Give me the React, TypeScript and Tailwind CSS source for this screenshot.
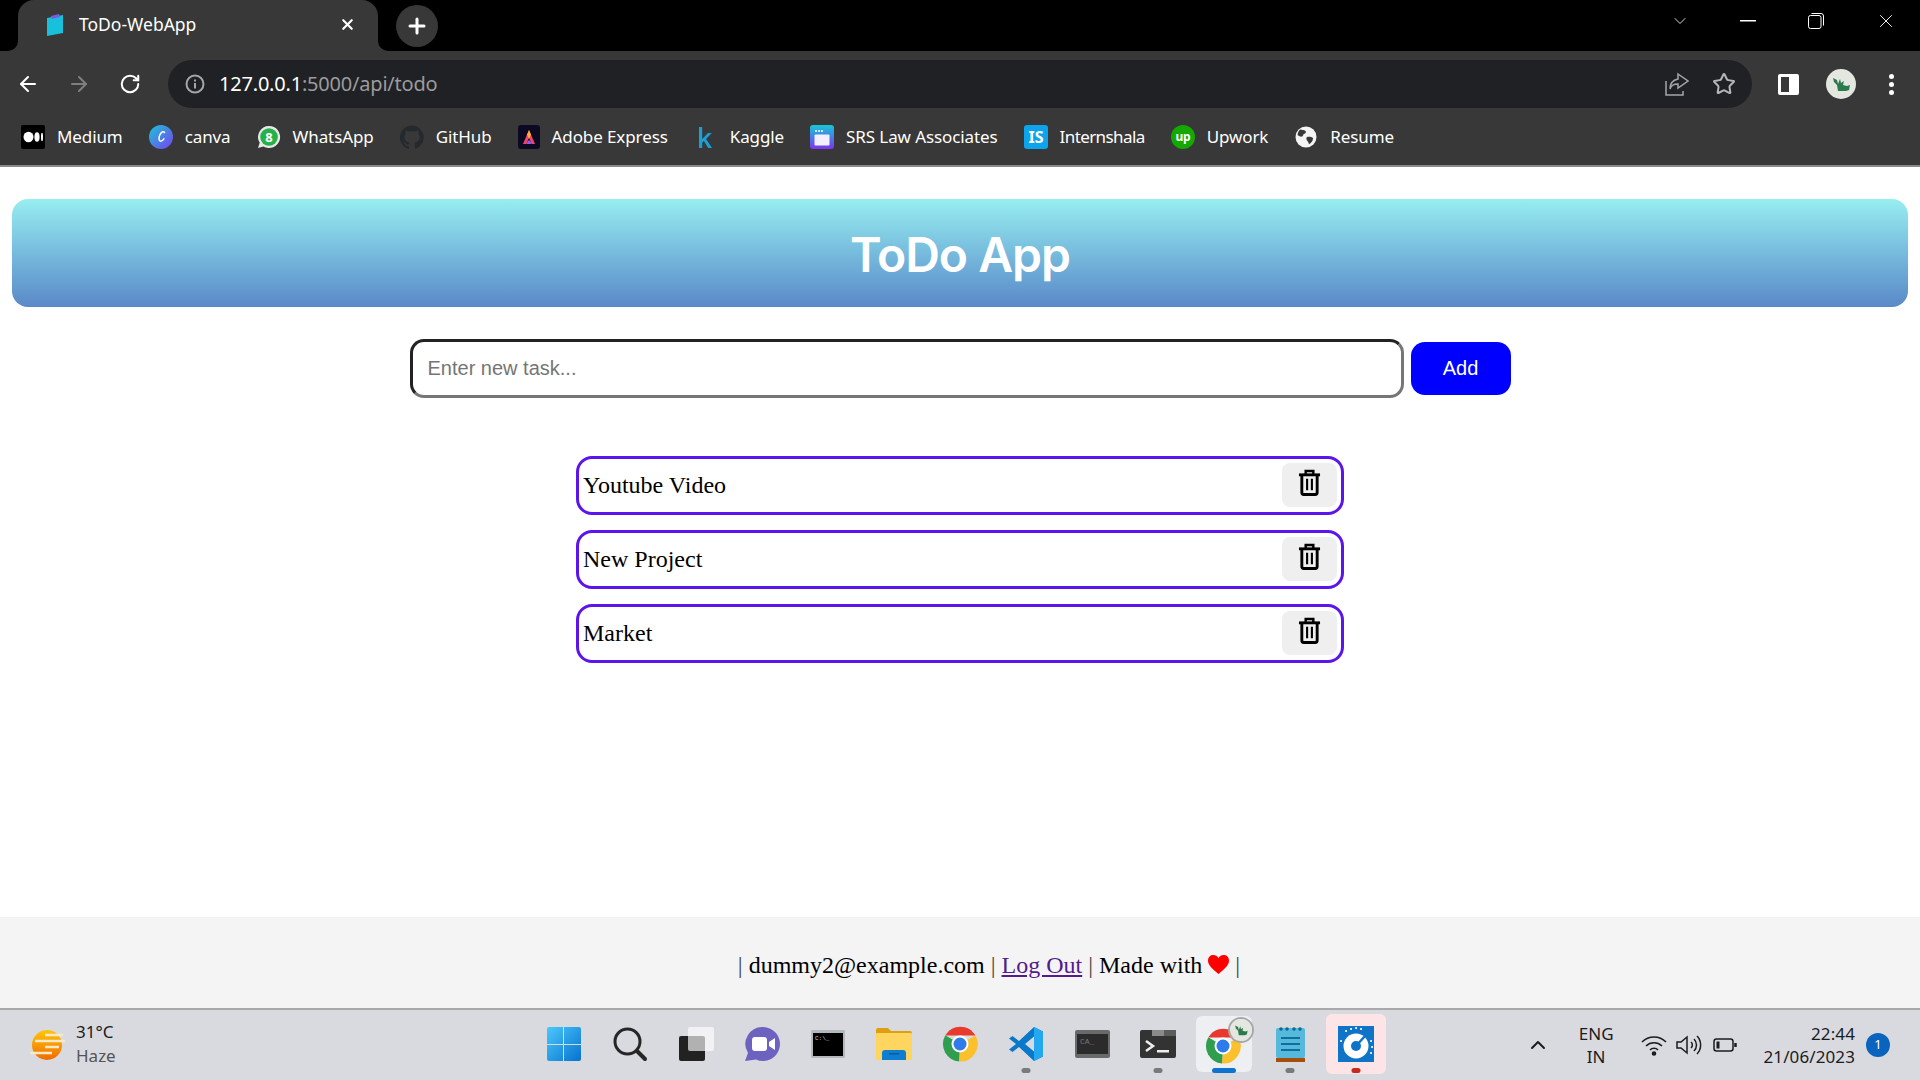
import { ArrowLeft, ArrowRight, ChevronDown, ChevronUp, Plus, RotateCw, Star, X } from "lucide-react"

const bookmarks = [
  { name: "Medium", icon: <MediumIcon /> },
  { name: "canva", icon: <CanvaIcon /> },
  { name: "WhatsApp", icon: <WhatsAppIcon /> },
  { name: "GitHub", icon: <GithubIcon /> },
  { name: "Adobe Express", icon: <AdobeIcon /> },
  { name: "Kaggle", icon: <KaggleIcon /> },
  { name: "SRS Law Associates", icon: <SrsIcon /> },
  { name: "Internshala", icon: <InternshalaIcon />, textClass: "tracking-[-0.6px]" },
  { name: "Upwork", icon: <UpworkIcon /> },
  { name: "Resume", icon: <GlobeIcon /> },
]

const todos = ["Youtube Video", "New Project", "Market"]

function MediumIcon() {
  return (
    <svg width="24" height="24" viewBox="0 0 24 24">
      <rect width="24" height="24" rx="2" fill="#000" />
      <ellipse cx="7.5" cy="12" rx="5" ry="5.2" fill="#fff" />
      <ellipse cx="16" cy="12" rx="2.6" ry="4.8" fill="#fff" />
      <ellipse cx="21" cy="12" rx="1" ry="4.2" fill="#fff" />
    </svg>
  )
}

function CanvaIcon() {
  return (
    <svg width="24" height="24" viewBox="0 0 24 24">
      <defs>
        <linearGradient id="canva" x1="0" y1="0" x2="1" y2="1">
          <stop offset="0" stopColor="#19c6d8" />
          <stop offset="1" stopColor="#7a3ff0" />
        </linearGradient>
      </defs>
      <circle cx="12" cy="12" r="12" fill="url(#canva)" />
      <path d="M15.5 7.5c-1-1.6-3.4-.4-4.6 2.2-1.3 2.8-1.2 6.4.6 6.6 1.3.1 2.6-1.2 3.4-2.4" fill="none" stroke="#fff" strokeWidth="1.5" strokeLinecap="round" />
    </svg>
  )
}

function WhatsAppIcon() {
  return (
    <svg width="24" height="24" viewBox="0 0 24 24">
      <path d="M12 1a11 11 0 0 0-9.3 16.8L1 23l5.4-1.6A11 11 0 1 0 12 1z" fill="#e8e8e8" />
      <circle cx="12" cy="12" r="8.8" fill="#25b14a" />
      <text x="12" y="16.5" textAnchor="middle" fontSize="13" fontWeight="700" fill="#fff" fontFamily="Noto Sans, sans-serif">8</text>
    </svg>
  )
}

function GithubIcon() {
  return (
    <svg width="24" height="24" viewBox="0 0 24 24">
      <path d="M12 .5a12 12 0 0 0-3.8 23.4c.6.1.8-.3.8-.6v-2.1c-3.3.7-4-1.6-4-1.6-.5-1.4-1.3-1.8-1.3-1.8-1.1-.7.1-.7.1-.7 1.2.1 1.8 1.2 1.8 1.2 1.1 1.8 2.8 1.3 3.5 1 .1-.8.4-1.3.8-1.6-2.7-.3-5.5-1.3-5.5-5.9 0-1.3.5-2.4 1.2-3.2-.1-.3-.5-1.5.1-3.2 0 0 1-.3 3.3 1.2a11.500 11.500 0 0 1 6 0c2.300-1.500 3.300-1.200 3.300-1.200.7 1.700.3 2.900.1 3.200.8.800 1.200 1.900 1.200 3.200 0 4.600-2.800 5.600-5.500 5.900.4.400.8 1.100.8 2.200v3.300c0 .3.200.7.800.6A12 12 0 0 0 12 .5z" fill="#24292e" />
    </svg>
  )
}

function AdobeIcon() {
  return (
    <svg width="22" height="24" viewBox="0 0 22 24">
      <rect width="22" height="24" rx="3" fill="#0c0a22" />
      <path d="M11 5l-6 14h3.500L11 12.500 13.500 19H17z" fill="#f0436a" />
      <path d="M11 5l-2 4.700L11 14l2-4.300z" fill="#ffb02e" />
      <path d="M8.500 19l1.500-3.500h2L13.500 19z" fill="#8a5cf6" />
    </svg>
  )
}

function KaggleIcon() {
  return (
    <svg width="24" height="24" viewBox="0 0 24 24">
      <path d="M5 2h3.200v12L14 8h3.800l-5.700 6L18 23h-3.800l-4.300-7-1.700 1.700V23H5z" fill="#1c9fd4" />
    </svg>
  )
}

function SrsIcon() {
  return (
    <svg width="24" height="24" viewBox="0 0 24 24">
      <defs>
        <linearGradient id="srs" x1="0" y1="0" x2="0" y2="1">
          <stop offset="0" stopColor="#16c8d8" />
          <stop offset="1" stopColor="#7c35ef" />
        </linearGradient>
      </defs>
      <rect width="24" height="24" rx="3" fill="url(#srs)" />
      <rect x="4.500" y="9.500" width="15" height="11" rx="1" fill="#f3efff" />
      <rect x="4.500" y="5.500" width="15" height="2.500" fill="none" />
      <circle cx="6" cy="6" r="1" fill="#fff" />
      <circle cx="9" cy="6" r="1" fill="#fff" />
      <circle cx="12" cy="6" r="1" fill="#fff" />
    </svg>
  )
}

function InternshalaIcon() {
  return (
    <svg width="24" height="24" viewBox="0 0 24 24">
      <rect width="24" height="24" rx="3" fill="#0ca4ec" />
      <text x="12" y="18" textAnchor="middle" fontSize="16" fontWeight="700" fill="#fff" fontFamily="Noto Sans, sans-serif">IS</text>
    </svg>
  )
}

function UpworkIcon() {
  return (
    <svg width="24" height="24" viewBox="0 0 24 24">
      <circle cx="12" cy="12" r="12" fill="#14a800" />
      <text x="12" y="16" textAnchor="middle" fontSize="12" fontWeight="700" fill="#fff" fontFamily="Noto Sans, sans-serif">up</text>
    </svg>
  )
}

function GlobeIcon() {
  return (
    <svg width="24" height="24" viewBox="-1 -1 24 24">
      <circle cx="11" cy="11" r="10.500" fill="#f4f4f4" />
      <path d="M5 3.500c2 .5 4 .2 5.500 1.500 1 1 0 2.500-1.200 2.800-1.500.4-.8 2.200-2.300 2.700-1.600.5-3.300-.5-4.500-1.500C2.800 7 3.500 5 5 3.500zM12 11c2-.8 4.500-.2 6 1 .2 2.600-1.500 5-4 6.200-.5-1.500-.8-2.500-1.800-3.500-.8-.8-1.200-2.900-.2-3.700z" fill="#383838" />
    </svg>
  )
}

function TrashIcon() {
  return (
    <svg className="mb-[6px]" width="23" height="27" viewBox="0 0 24 28" fill="none" stroke="#000">
      <path d="M1 6h22" strokeWidth="3" />
      <path d="M8 5V2h8v3" strokeWidth="2.500" />
      <path d="M4 6v18.500a2 2 0 0 0 2 2h12a2 2 0 0 0 2-2V6" strokeWidth="3" />
      <path d="M9.500 10v12M14.500 10v12" strokeWidth="2.200" />
    </svg>
  )
}

function ChromeIcon({ size = 36 }: { size?: number }) {
  return (
    <svg width={size} height={size} viewBox="0 0 36 36">
      <path d="M18 18 L4.600 26 A16 16 0 0 1 4 10 Z" fill="#2f9e4f" />
      <path d="M3.200 9.500A17.500 17.500 0 0 1 33.500 9.500H18z" fill="#e8392c" />
      <path d="M33.500 9.500A17.500 17.500 0 0 1 17 35.500L18 18z" fill="#fbc02d" />
      <path d="M3.200 9.500 18 18l-1 17.500A17.500 17.500 0 0 1 3.200 9.500z" fill="#2f9e4f" />
      <circle cx="18" cy="18" r="8.500" fill="#fff" />
      <circle cx="18" cy="18" r="6.500" fill="#2f7bea" />
    </svg>
  )
}

function AvatarArt({ size }: { size: number }) {
  return (
    <svg width={size} height={size} viewBox="0 0 30 30">
      <circle cx="15" cy="15" r="15" fill="#e4e6e0" />
      <path d="M7 9l4 2 1 4 2-5 1 4 3-2-1 4 4 1 3-1-1 5-3 1h-8l-1-6-3-3z" fill="#2c7a4b" />
    </svg>
  )
}

const taskbarIcons = [
  {
    key: "start",
    icon: (
      <svg width="36" height="36" viewBox="0 0 36 36">
        <defs>
          <linearGradient id="win" x1="0" y1="0" x2="1" y2="1">
            <stop offset="0" stopColor="#4cc8fb" />
            <stop offset="1" stopColor="#0672cf" />
          </linearGradient>
        </defs>
        <path d="M1 3a2 2 0 0 1 2-2h14v17H1zM18 1h15a2 2 0 0 1 2 2v15H18zM1 19h16v16H3a2 2 0 0 1-2-2zM18 19h17v14a2 2 0 0 1-2 2H18z" fill="url(#win)" />
      </svg>
    ),
  },
  {
    key: "search",
    icon: (
      <svg width="36" height="36" viewBox="0 0 36 36" fill="none" stroke="#262626">
        <circle cx="15.500" cy="15.500" r="12.500" strokeWidth="3" />
        <path d="M25 25l8 8" strokeWidth="4" strokeLinecap="round" />
      </svg>
    ),
  },
  {
    key: "taskview",
    icon: (
      <svg width="36" height="36" viewBox="0 0 36 36">
        <rect x="1" y="10" width="26" height="25" rx="2" fill="#222" />
        <rect x="10" y="1" width="26" height="24" rx="2" fill="#fff" fillOpacity="0.65" />
      </svg>
    ),
  },
  {
    key: "meet",
    icon: (
      <svg width="36" height="36" viewBox="0 0 36 36">
        <path d="M19 1a17 17 0 1 1-7 32.500L1 35l3-8A17 17 0 0 1 19 1z" fill="#6d62c0" />
        <rect x="8" y="11" width="15" height="14" rx="3" fill="#fff" />
        <path d="M25 16l6-4v12l-6-4z" fill="#fff" />
      </svg>
    ),
  },
  {
    key: "cmd",
    icon: (
      <svg width="34" height="28" viewBox="0 0 34 28">
        <rect width="34" height="28" rx="1" fill="#b4b8bc" />
        <rect x="2" y="3" width="30" height="23" fill="#000" />
        <text x="4" y="10" fontSize="6" fill="#ccc" fontFamily="Liberation Mono, monospace">C:\_</text>
      </svg>
    ),
  },
  {
    key: "folder",
    icon: (
      <svg width="36" height="32" viewBox="0 0 36 32">
        <path d="M0 2a2 2 0 0 1 2-2h10l3 3h19a2 2 0 0 1 2 2v3H0z" fill="#dfa00f" />
        <rect y="5" width="36" height="27" rx="1" fill="#fed55f" />
        <path d="M6 32v-7a3 3 0 0 1 3-3h18a3 3 0 0 1 3 3v7z" fill="#0f7ed0" />
        <rect x="13" y="25" width="10" height="1.500" fill="#0a5aa0" />
      </svg>
    ),
  },
  { key: "chrome", icon: <ChromeIcon /> },
  {
    key: "vscode",
    indicator: "bg-[#7a7a7a] w-[9px]",
    icon: (
      <svg width="36" height="36" viewBox="0 0 36 36">
        <path d="M26 1l9 4.500v25L26 35 11 21l-6.500 5L1 23.500 8 18 1 12.500 4.500 10l6.500 5z" fill="#0a78c8" />
        <path d="M26 1l9 4.500v25L26 35z" fill="#24a8f0" />
        <path d="M26 10.500 17 18l9 7.500z" fill="#d9dae0" />
      </svg>
    ),
  },
  {
    key: "terminal-old",
    icon: (
      <svg width="35" height="28" viewBox="0 0 35 28">
        <rect width="35" height="28" rx="2" fill="#6a6a6a" />
        <rect x="2" y="4" width="31" height="20" fill="#2b2b2b" />
        <text x="5" y="14" fontSize="8" fill="#777" fontFamily="Liberation Mono, monospace">CA_</text>
      </svg>
    ),
  },
  {
    key: "terminal",
    indicator: "bg-[#7a7a7a] w-[9px]",
    icon: (
      <svg width="36" height="28" viewBox="0 0 36 28">
        <rect width="36" height="28" rx="2" fill="#333" />
        <rect x="12" width="12" height="6" fill="#8a8a8a" />
        <rect x="24" width="12" height="6" fill="#5c5c5c" />
        <path d="M6 11l7 5-7 5" fill="none" stroke="#eee" strokeWidth="2.500" />
        <rect x="17" y="20" width="12" height="2.500" fill="#eee" />
      </svg>
    ),
  },
  {
    key: "chrome-profile",
    active: "bg-[#eeeff2] w-[56px] h-[56px] top-[6px]",
    indicator: "bg-[#0f74d0] w-[24px]",
    icon: (
      <div className="relative mt-[4px] ml-[-2px]">
        <ChromeIcon />
        <div className="absolute top-[-11px] right-[-13px] rounded-full border-[2px] border-[#a8a8a8]">
          <AvatarArt size={22} />
        </div>
      </div>
    ),
  },
  {
    key: "notepad",
    indicator: "bg-[#7a7a7a] w-[9px]",
    icon: (
      <svg width="29" height="36" viewBox="0 0 29 36">
        <rect y="2" width="29" height="30" rx="2" fill="#56b9dc" />
        <rect y="32" width="29" height="4" fill="#a64f0c" />
        <circle cx="5" cy="3" r="1.800" fill="#0a6a94" />
        <circle cx="11" cy="3" r="1.800" fill="#0a6a94" />
        <circle cx="18" cy="3" r="1.800" fill="#0a6a94" />
        <circle cx="24" cy="3" r="1.800" fill="#0a6a94" />
        <path d="M5 12h19M5 18h19M5 24h19" stroke="#0f6f9c" strokeWidth="2" />
      </svg>
    ),
  },
  {
    key: "speed",
    active: "bg-[#fde5e7] w-[60px] h-[60px] top-[4px]",
    indicator: "bg-[#c42b1c] w-[9px]",
    icon: (
      <svg width="36" height="36" viewBox="0 0 36 36">
        <rect width="36" height="36" fill="#0f74c8" />
        <circle cx="18" cy="20" r="12.500" fill="#fff" />
        <circle cx="18" cy="20" r="5" fill="#0f74c8" />
        <path d="M18 20l9-10" stroke="#0f74c8" strokeWidth="2.500" />
        <path d="M8 5h.1M13 3h.1M18 2h.1M23 3h.1M33 15h.1M34 21h.1M33 27h.1M3 15h.1" stroke="#fff" strokeWidth="2" strokeLinecap="round" />
      </svg>
    ),
  },
]

export default function App() {
  return (
    <div className="h-screen flex flex-col overflow-hidden bg-white font-['Noto_Sans',sans-serif]">

      {/* tab strip */}
      <div className="h-[51px] shrink-0 bg-black flex items-start pl-[18px] pr-[23px]">
        <div className="relative w-[360px] h-[51px] bg-[#383838] rounded-t-[16px] flex items-center pl-[27px] pr-[22px] pb-[2px] text-white">
          <svg className="absolute left-[-10px] bottom-0" width="10" height="10" viewBox="0 0 10 10"><path d="M10 0v10H0a10 10 0 0 0 10-10z" fill="#383838" /></svg>
          <svg className="absolute right-[-10px] bottom-0" width="10" height="10" viewBox="0 0 10 10"><path d="M0 0v10h10A10 10 0 0 1 0 0z" fill="#383838" /></svg>
          <svg width="20" height="24" viewBox="0 0 20 24">
            <path d="M2 5l16-3v18L2 23z" fill="#19c0dc" />
            <path d="M6 3l8-2 1 3-8 2z" fill="#7b5be0" />
          </svg>
          <span className="ml-[14px] text-[17.5px]">ToDo-WebApp</span>
          <X className="ml-auto" size={17} strokeWidth={3} />
        </div>
        <div className="ml-[18px] mt-[5px] w-[42px] h-[42px] rounded-full bg-[#383838] flex items-center justify-center text-white">
          <Plus size={24} strokeWidth={3} />
        </div>
        <div className="ml-auto h-[42px] flex items-center text-white">
          <ChevronDown size={20} strokeWidth={1} />
          <svg className="ml-[50px]" width="16" height="2"><rect width="16" height="1.500" fill="#fff" /></svg>
          <svg className="ml-[52px]" width="16" height="16" viewBox="0 0 16 16" fill="none" stroke="#fff"><rect x=".5" y="2.500" width="12.500" height="13" rx="2" /><path d="M3.500.5H13a2.500 2.500 0 0 1 2.500 2.500v9.500" /></svg>
          <X className="ml-[51px]" size={22} strokeWidth={1} />
        </div>
      </div>

      {/* toolbar */}
      <div className="h-[57px] shrink-0 bg-[#383838] flex items-center pl-[16px] pr-[20px] pt-[9px] pb-0">
        <ArrowLeft className="text-white" size={24} strokeWidth={2} />
        <ArrowRight className="ml-[27px] text-[#7f7f7f]" size={24} strokeWidth={2} />
        <RotateCw className="ml-[28px] text-white" size={22} strokeWidth={2.200} />
        <div className="ml-[27px] w-[1584px] h-[48px] rounded-full bg-[#202124] flex items-center pl-[17px] pr-[16px]">
          <svg width="20" height="20" viewBox="0 0 20 20" fill="none" stroke="#a5a6a8" strokeWidth="2">
            <circle cx="10" cy="10" r="8.500" />
            <path d="M10 9v5.500M10 5.500v2" />
          </svg>
          <span className="ml-[14px] text-[20px] text-white tracking-[-0.2px]">127.0.0.1<span className="text-[#9a9b9d]">:5000/api/todo</span></span>
          <svg className="ml-auto" width="24" height="24" viewBox="0 0 24 24" fill="none" stroke="#a5a6a8" strokeWidth="1.500">
            <path d="M1 9v14h17v-4" />
            <path d="M13 2l10 7-10 7v-4c-4 0-7 1-8 5 0-6 3-9 8-10z" />
          </svg>
          <Star className="ml-[23px] text-[#b5b6b8]" size={24} strokeWidth={2} />
        </div>
        <svg className="ml-[26px]" width="21" height="21" viewBox="0 0 21 21">
          <rect width="21" height="21" rx="2" fill="#fff" />
          <rect x="3" y="3" width="8" height="15" fill="#383838" />
        </svg>
        <div className="ml-[27px]"><AvatarArt size={30} /></div>
        <div className="ml-[33px] flex flex-col gap-[3px]">
          <div className="w-[5px] h-[5px] rounded-full bg-white" />
          <div className="w-[5px] h-[5px] rounded-full bg-white" />
          <div className="w-[5px] h-[5px] rounded-full bg-white" />
        </div>
      </div>

      {/* bookmarks */}
      <div className="h-[59px] shrink-0 bg-[#383838] border-b-[2px] border-[#8a8a8a] flex items-center pl-[21px] gap-[26px] text-white text-[17px] tracking-[-0.1px]">
        {bookmarks.map((b) => (
          <div key={b.name} className="flex items-center gap-[12px]">
            {b.icon}
            <span className={b.textClass}>{b.name}</span>
          </div>
        ))}
      </div>

      <div className="flex-1 flex flex-col min-h-0">
        <div className="pt-[32px] px-[12px]">
          <div className="h-[108px] rounded-[16px] bg-gradient-to-b from-[#97eef0] to-[#5a89c8] flex items-center justify-center pt-[4px]">
            <h1 className="text-white text-[48px] font-semibold font-['Inter',sans-serif] tracking-[-1px]">ToDo App</h1>
          </div>
        </div>

        <div className="mt-[32px] flex justify-center gap-[7px] items-center font-['Liberation_Sans',sans-serif]">
          <input
            placeholder="Enter new task..."
            className="w-[994px] h-[59px] rounded-[14px] border-[3px] border-t-[#222] border-l-[#222] border-r-[#767676] border-b-[#767676] px-[15px] text-[20px] placeholder:text-[#757575] outline-none"
          />
          <button className="w-[100px] h-[53px] rounded-[14px] bg-[#0000ff] text-white text-[20px] pb-[2px]">Add</button>
        </div>

        <ul className="mt-[58px] w-[768px] mx-auto flex flex-col gap-[15px] font-['Liberation_Serif',serif]">
          {todos.map((t) => (
            <li key={t} className="h-[59px] rounded-[16px] border-[3px] border-[#5b14ec] flex items-center justify-between pl-[4px] pr-[4px] text-[24px] text-black">
              <span className="mb-[2px]">{t}</span>
              <button className="w-[55px] h-[44px] rounded-[8px] bg-[#efefef] flex items-center justify-center mb-[1px]">
                <TrashIcon />
              </button>
            </li>
          ))}
        </ul>

        <footer className="mt-auto h-[91px] bg-[#f4f4f4] flex items-center justify-center font-['Liberation_Serif',serif] text-[24px] text-black pt-[4px] pl-[58px]">
          <span className="text-[#444]">|&nbsp;</span>dummy2@example.com<span className="text-[#444]">&nbsp;|&nbsp;</span>
          <a className="text-[#551a8b] underline">Log Out</a>
          <span className="text-[#444]">&nbsp;|&nbsp;</span>Made with&nbsp;
          <svg width="21" height="19" viewBox="0 0 21 19"><path d="M10.500 19C4 13.500 0 10 0 5.500 0 2 2.500 0 5.500 0c2 0 3.800 1 5 3 1.200-2 3-3 5-3 3 0 5.500 2 5.500 5.500 0 4.500-4 8-10.500 13.500z" fill="#ff0000" /></svg>
          <span className="text-[#444]">&nbsp;|</span>
        </footer>
      </div>

      {/* windows taskbar */}
      <div className="h-[72px] shrink-0 bg-[#d9dae0] border-t-[2px] border-[#a9a9a9] grid grid-cols-[1fr_auto_1fr] items-center">
        <div className="flex items-center pl-[29px]">
          <svg width="36" height="32" viewBox="0 0 36 32">
            <defs>
              <linearGradient id="sun" x1="0" y1="0" x2="0" y2="1">
                <stop offset="0" stopColor="#ffc60a" />
                <stop offset="1" stopColor="#ef6c00" />
              </linearGradient>
            </defs>
            <circle cx="18" cy="16" r="15" fill="url(#sun)" />
            <path d="M16 6h18M6 12h30M16 18h14M1 24h22" stroke="#f5e9c8" strokeWidth="2.500" />
          </svg>
          <div className="ml-[11px] text-[17px] leading-[24px] mb-[2px]">
            <div className="text-[#1c1c1c]">31°C</div>
            <div className="text-[#555]">Haze</div>
          </div>
        </div>

        <div className="flex">
          {taskbarIcons.map((t) => (
            <div key={t.key} className="relative w-[66px] h-[70px] flex items-center justify-center">
              {t.active && <div className={"absolute rounded-[6px] left-1/2 -translate-x-1/2 " + t.active} />}
              <div className="relative flex mb-[2px]">{t.icon}</div>
              {t.indicator && <div className={"absolute bottom-[7px] left-1/2 -translate-x-1/2 h-[5px] rounded-full " + t.indicator} />}
            </div>
          ))}
        </div>

        <div className="flex items-center justify-end pr-[30px] text-[#1c1c1c] text-[17px]">
          <ChevronUp size={24} strokeWidth={2} />
          <div className="ml-[29px] text-center leading-[23px]">ENG<br />IN</div>
          <svg className="ml-[27px]" width="26" height="22" viewBox="0 0 26 22" fill="none" stroke="#1c1c1c" strokeWidth="1.600">
            <path d="M1 8a17 17 0 0 1 24 0M5 12a11.500 11.500 0 0 1 16 0M9 16a5.500 5.500 0 0 1 8 0" />
            <circle cx="13" cy="19.500" r="1.500" fill="#1c1c1c" />
          </svg>
          <svg className="ml-[9px]" width="26" height="22" viewBox="0 0 26 22" fill="none" stroke="#1c1c1c" strokeWidth="1.500">
            <path d="M1 8v6h4l6 5V3L5 8z" />
            <path d="M15 8a4 4 0 0 1 0 6M18 5a8.500 8.500 0 0 1 0 12M21 2a13 13 0 0 1 0 18" />
          </svg>
          <svg className="ml-[11px]" width="24" height="16" viewBox="0 0 24 16" fill="none" stroke="#1c1c1c" strokeWidth="1.500">
            <rect x="1" y="2" width="19" height="12" rx="2.500" />
            <rect x="3.500" y="4.500" width="3" height="7" fill="#1c1c1c" stroke="none" />
            <path d="M22.500 6v4" strokeWidth="2.500" />
          </svg>
          <div className="ml-[27px] text-right leading-[23px] tracking-[0.1px]">22:44<br />21/06/2023</div>
          <div className="ml-[11px] w-[24px] h-[24px] rounded-full bg-[#0a63bd] text-white text-[13px] flex items-center justify-center">1</div>
        </div>
      </div>
    </div>
  )
}
